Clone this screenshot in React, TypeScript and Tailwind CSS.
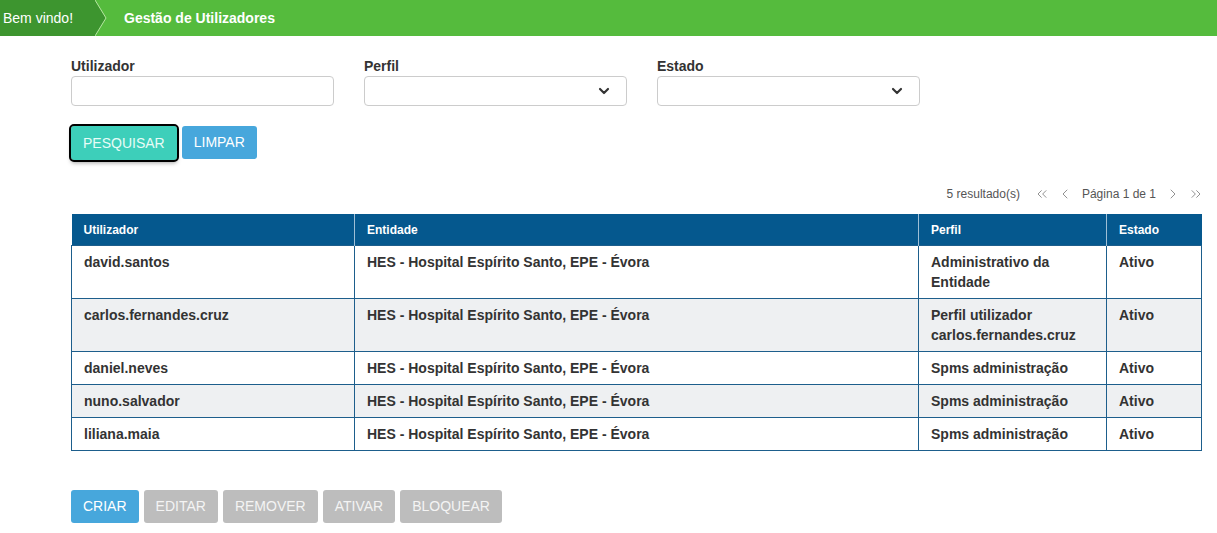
import React from "react";
import { ChevronDown, ChevronLeft, ChevronRight, ChevronsLeft, ChevronsRight } from "lucide-react";

const rows = [
  { user: "david.santos", entity: "HES - Hospital Espírito Santo, EPE - Évora", profile: "Administrativo da Entidade", state: "Ativo" },
  { user: "carlos.fernandes.cruz", entity: "HES - Hospital Espírito Santo, EPE - Évora", profile: "Perfil utilizador carlos.fernandes.cruz", state: "Ativo" },
  { user: "daniel.neves", entity: "HES - Hospital Espírito Santo, EPE - Évora", profile: "Spms administração", state: "Ativo" },
  { user: "nuno.salvador", entity: "HES - Hospital Espírito Santo, EPE - Évora", profile: "Spms administração", state: "Ativo" },
  { user: "liliana.maia", entity: "HES - Hospital Espírito Santo, EPE - Évora", profile: "Spms administração", state: "Ativo" },
];

const Field = ({ label, select }: { label: string; select?: boolean }) => (
  <div className="flex flex-col w-[263px]">
    <label className="text-[14px] font-bold text-[#333] leading-4 mb-[2px]">{label}</label>
    <div className="h-[30px] border border-[#ccc] rounded-[4px] bg-white flex items-center justify-end pr-[14px]">
      {select && <ChevronDown size={16} strokeWidth={3.2} color="#333" />}
    </div>
  </div>
);

const App = () => {
  return (
    <div className="w-[1217px] h-[533px] bg-white font-['Liberation_Sans',Arial,sans-serif] text-[#333]">
      {/* breadcrumb bar */}
      <div className="h-9 bg-[#55bb3d] flex items-center text-white text-[14px]">
        <div className="h-full w-[95px] bg-[#3d952f] flex items-center pl-[3px]">Bem vindo!</div>
        <svg width="12" height="36" viewBox="0 0 12 36" className="block">
          <polygon points="0,0 11,18 0,36" fill="#3d952f" />
          <polyline points="0,0 11,18 0,36" fill="none" stroke="#b7e6a3" strokeWidth="1" />
        </svg>
        <div className="ml-[17px] font-bold">Gestão de Utilizadores</div>
      </div>

      <div className="ml-[71px] w-[1130px]">
        {/* filters */}
        <div className="flex gap-[30px] pt-[22px]">
          <Field label="Utilizador" />
          <Field label="Perfil" select />
          <Field label="Estado" select />
        </div>

        <div className="flex gap-[5px] mt-5">
          <button className="h-[34px] px-3 rounded-[3px] bg-[#3dcfba] text-[#e8fcf7] text-[14px] outline-2 outline-black shadow-[0_3px_4px_rgba(0,0,0,0.35)]">
            PESQUISAR
          </button>
          <button className="h-[33px] px-3 rounded-[3px] bg-[#47a7dc] text-white text-[14px]">LIMPAR</button>
        </div>

        {/* pagination */}
        <div className="flex justify-end items-center mt-[26px] h-4 text-[12px] text-[#555]">
          <span className="mr-[14px]">5 resultado(s)</span>
          <ChevronsLeft size={16} strokeWidth={1.4} color="#8a8a8a" />
          <ChevronLeft size={16} strokeWidth={1.4} color="#8a8a8a" className="ml-[7px]" />
          <span className="ml-[9px]">Página 1 de 1</span>
          <ChevronRight size={16} strokeWidth={1.4} color="#8a8a8a" className="ml-[9px]" />
          <ChevronsRight size={16} strokeWidth={1.4} color="#8a8a8a" className="ml-[7px] mr-[-3px]" />
        </div>

        {/* table */}
        <table className="mt-[12px] w-[1130px] border-collapse table-fixed">
          <colgroup>
            <col className="w-[283px]" />
            <col className="w-[564px]" />
            <col className="w-[188px]" />
            <col className="w-[95px]" />
          </colgroup>
          <thead>
            <tr className="bg-[#05588e] text-white text-[12px] font-bold text-left">
              <th className="h-[31px] px-3 pt-[1px] border-r border-[#9fbfd6]">Utilizador</th>
              <th className="px-3 pt-[1px] border-r border-[#9fbfd6]">Entidade</th>
              <th className="px-3 pt-[1px] border-r border-[#9fbfd6]">Perfil</th>
              <th className="px-3 pt-[1px]">Estado</th>
            </tr>
          </thead>
          <tbody>
            {rows.map((r, i) => (
              <tr key={r.user} className={i % 2 === 1 ? "bg-[#eef0f2]" : "bg-white"}>
                {[r.user, r.entity, r.profile, r.state].map((c, j) => (
                  <td
                    key={j}
                    className="border border-[#1d5e8c] px-3 py-[6px] align-top text-[14px] font-bold leading-5 text-[#333]"
                  >
                    {c}
                  </td>
                ))}
              </tr>
            ))}
          </tbody>
        </table>

        {/* actions */}
        <div className="flex gap-[5px] mt-[39px]">
          <button className="h-[33px] px-3 rounded-[3px] bg-[#47a7dc] text-white text-[14px]">CRIAR</button>
          {["EDITAR", "REMOVER", "ATIVAR", "BLOQUEAR"].map((b) => (
            <button key={b} className="h-[33px] px-3 rounded-[3px] bg-[#bdbdbd] text-[#f4f4f4] text-[14px]">
              {b}
            </button>
          ))}
        </div>
      </div>
    </div>
  );
};

export default App;
